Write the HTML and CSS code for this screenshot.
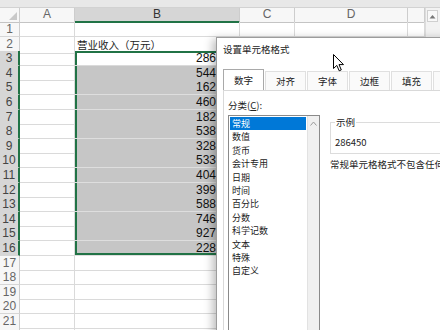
FILE: index.html
```html
<!DOCTYPE html>
<html lang="zh-CN">
<head>
<meta charset="utf-8">
<title>设置单元格格式</title>
<link rel="stylesheet" href="styles.css">
</head>
<body>
<div class="app">
  <div class="formula"></div>
  <div class="main">
    <div class="sheet">
      <div class="row hdr"><div class="corner"><span class="tri"></span></div><div class="ch">A</div><div class="ch on">B</div><div class="ch">C</div><div class="ch">D</div><div class="ch"></div></div>
      <div class="row"><div class="rh">1</div><div class="c"></div><div class="c"></div><div class="c"></div><div class="c"></div><div class="c"></div></div>
      <div class="row"><div class="rh">2</div><div class="c"></div><div class="c txt">营业收入（万元）</div><div class="c"></div><div class="c"></div><div class="c"></div></div>
      <div class="row sel first"><div class="rh">3</div><div class="c"></div><div class="c b num active">286450</div><div class="c"></div><div class="c"></div><div class="c"></div></div>
      <div class="row sel"><div class="rh">4</div><div class="c"></div><div class="c b num">544320</div><div class="c"></div><div class="c"></div><div class="c"></div></div>
      <div class="row sel"><div class="rh">5</div><div class="c"></div><div class="c b num">162780</div><div class="c"></div><div class="c"></div><div class="c"></div></div>
      <div class="row sel"><div class="rh">6</div><div class="c"></div><div class="c b num">460150</div><div class="c"></div><div class="c"></div><div class="c"></div></div>
      <div class="row sel"><div class="rh">7</div><div class="c"></div><div class="c b num">182930</div><div class="c"></div><div class="c"></div><div class="c"></div></div>
      <div class="row sel"><div class="rh">8</div><div class="c"></div><div class="c b num">538610</div><div class="c"></div><div class="c"></div><div class="c"></div></div>
      <div class="row sel"><div class="rh">9</div><div class="c"></div><div class="c b num">328470</div><div class="c"></div><div class="c"></div><div class="c"></div></div>
      <div class="row sel"><div class="rh">10</div><div class="c"></div><div class="c b num">533290</div><div class="c"></div><div class="c"></div><div class="c"></div></div>
      <div class="row sel"><div class="rh">11</div><div class="c"></div><div class="c b num">404860</div><div class="c"></div><div class="c"></div><div class="c"></div></div>
      <div class="row sel"><div class="rh">12</div><div class="c"></div><div class="c b num">399120</div><div class="c"></div><div class="c"></div><div class="c"></div></div>
      <div class="row sel"><div class="rh">13</div><div class="c"></div><div class="c b num">588740</div><div class="c"></div><div class="c"></div><div class="c"></div></div>
      <div class="row sel"><div class="rh">14</div><div class="c"></div><div class="c b num">746350</div><div class="c"></div><div class="c"></div><div class="c"></div></div>
      <div class="row sel"><div class="rh">15</div><div class="c"></div><div class="c b num">927680</div><div class="c"></div><div class="c"></div><div class="c"></div></div>
      <div class="row sel last"><div class="rh">16</div><div class="c"></div><div class="c b num">228510</div><div class="c"></div><div class="c"></div><div class="c"></div></div>
      <div class="row"><div class="rh">17</div><div class="c"></div><div class="c"></div><div class="c"></div><div class="c"></div><div class="c"></div></div>
      <div class="row"><div class="rh">18</div><div class="c"></div><div class="c"></div><div class="c"></div><div class="c"></div><div class="c"></div></div>
      <div class="row"><div class="rh">19</div><div class="c"></div><div class="c"></div><div class="c"></div><div class="c"></div><div class="c"></div></div>
      <div class="row"><div class="rh">20</div><div class="c"></div><div class="c"></div><div class="c"></div><div class="c"></div><div class="c"></div></div>
      <div class="row"><div class="rh">21</div><div class="c"></div><div class="c"></div><div class="c"></div><div class="c"></div><div class="c"></div></div>
      <div class="row"><div class="rh"></div><div class="c"></div><div class="c"></div><div class="c"></div><div class="c"></div><div class="c"></div></div>
    </div>
    <div class="vscroll"><div class="vbtn"><svg width="7" height="5" viewBox="0 0 7 5"><path d="M0.5 4.5 L3.5 1 L6.5 4.5 Z" fill="#777"/></svg></div></div>
  </div>

  <div class="dialog">
    <div class="title">设置单元格格式</div>
    <div class="tabs">
      <div class="tab on">数字</div>
      <div class="tab">对齐</div>
      <div class="tab">字体</div>
      <div class="tab">边框</div>
      <div class="tab">填充</div>
      <div class="tab"></div>
    </div>
    <div class="panel">
      <div class="label">分类(<u>C</u>):</div>
      <div class="list">
        <div class="items">
          <div class="item on">常规</div>
          <div class="item">数值</div>
          <div class="item">货币</div>
          <div class="item">会计专用</div>
          <div class="item">日期</div>
          <div class="item">时间</div>
          <div class="item">百分比</div>
          <div class="item">分数</div>
          <div class="item">科学记数</div>
          <div class="item">文本</div>
          <div class="item">特殊</div>
          <div class="item">自定义</div>
        </div>
        <div class="lscroll"><svg width="7" height="5" viewBox="0 0 7 5"><path d="M0.5 4.5 L3.5 1 L6.5 4.5" fill="none" stroke="#9a9a9a" stroke-width="1"/></svg></div>
      </div>
      <div class="right">
        <fieldset class="sample">
          <legend>示例</legend>
          <div class="sval">286450</div>
        </fieldset>
        <div class="desc">常规单元格格式不包含任何特定的数字格式。</div>
      </div>
    </div>
  </div>

  <svg class="cursor" width="12" height="18" viewBox="0 0 12 18"><path d="M0.5 0.5 L0.5 14.5 L3.8 11.4 L6.2 16.8 L8.3 15.9 L6 10.6 L10.5 10.6 Z" fill="#fff" stroke="#000" stroke-width="1" stroke-linejoin="round"/></svg>
</div>
</body>
</html>
```

FILE: styles.css
```css
* { box-sizing: border-box; }
html, body { margin: 0; padding: 0; }
body {
  width: 440px;
  height: 330px;
  overflow: hidden;
  background: #fff;
  font-family: "Liberation Sans", Arial, sans-serif;
}
.app {
  position: relative;
  width: 440px;
  height: 330px;
  overflow: hidden;
}
.formula {
  height: 8px;
  background: #e8e8e8;
  border-bottom: 1px solid #d2d2d2;
}
.main { display: flex; }
.sheet { width: 425px; }
.row {
  display: grid;
  grid-template-columns: 20px 55px 165px 55px 113px 17px;
  height: 14.6px;
}
.row.hdr { height: 14px; }
.c {
  border-right: 1px solid #dadada;
  border-bottom: 1px solid #dadada;
  font-size: 12px;
  line-height: 14px;
  color: #111;
  white-space: nowrap;
  overflow: hidden;
}
.rh, .ch, .corner {
  background: #f7f7f7;
  border-right: 1px solid #cdcdcd;
  border-bottom: 1px solid #d6d6d6;
  color: #666;
  font-size: 12px;
  line-height: 14px;
  text-align: center;
}
.ch { border-bottom-color: #c4c4c4; line-height: 13px; }
.ch.on {
  background: #d6d6d6;
  color: #333;
  border-bottom: 2px solid #217346;
}
.corner {
  position: relative;
  border-bottom-color: #c4c4c4;
}
.tri {
  position: absolute;
  right: 2px;
  bottom: 2px;
  width: 0;
  height: 0;
  border-left: 8px solid transparent;
  border-bottom: 8px solid #c9c9c9;
}
.txt {
  font-family: "Noto Sans CJK SC", sans-serif;
  font-size: 10.5px;
  line-height: 16px;
  padding-left: 2px;
  color: #222;
  overflow: visible;
}
.num {
  text-align: right;
  padding-right: 3px;
}
.sel .rh {
  background: #d6d6d6;
  color: #444;
  border-right: 2px solid #217346;
}
.sel .b {
  background: #c6c6c6;
  border-bottom-color: #dedede;
  box-shadow: inset 2px 0 #217346;
}
.sel .b.active { background: #fff; border-bottom-color: #dadada; }
.first .b { box-shadow: inset 2px 0 #217346, inset 0 2px #217346; }
.last .b { box-shadow: inset 2px 0 #217346, inset 0 -2px #217346; }

.vscroll {
  width: 15px;
  height: 330px;
  background: #f2f2f2;
  border-left: 1px solid #dcdcdc;
  padding: 2px 2px 0 1px;
}
.vbtn {
  height: 12px;
  border: 1px solid #cfcfcf;
  background: #f8f8f8;
  display: flex;
  align-items: center;
  justify-content: center;
}

.dialog {
  position: absolute;
  left: 216px;
  top: 37px;
  width: 260px;
  height: 320px;
  background: #fff;
  border: 1px solid #9c9c9c;
  box-shadow: -3px 2px 9px rgba(0, 0, 0, 0.28);
  font-family: "Noto Sans CJK SC", sans-serif;
  font-size: 9.5px;
  color: #222;
}
.title {
  height: 22px;
  padding: 4px 6px 0;
  line-height: 14px;
}
.tabs {
  display: flex;
  align-items: flex-end;
  gap: 1px;
  margin: 9px 0 0 6px;
  height: 21px;
}
.tab {
  width: 41px;
  height: 19px;
  line-height: 18px;
  text-align: center;
  border: 1px solid #e0e0e0;
  border-bottom: none;
  background: #fafafa;
}
.tab.on {
  height: 21px;
  line-height: 20px;
  background: #fff;
  border-color: #a9a9a9;
}
.panel {
  margin-left: 6px;
  height: 240px;
  border-left: 1px solid #d9d9d9;
  border-top: 1px solid #d9d9d9;
  padding: 7px 0 0 4px;
  display: grid;
  grid-template-columns: 92px 1fr;
  grid-template-rows: 14px 1fr;
  column-gap: 10px;
  row-gap: 3px;
}
.label {
  grid-column: 1 / span 2;
  line-height: 14px;
}
.list {
  display: flex;
  border: 1px solid #8a8a8a;
  height: 230px;
}
.items {
  flex: 1;
  padding: 1px;
}
.item {
  height: 13.4px;
  line-height: 13.4px;
  font-size: 9px;
  padding-left: 2px;
  white-space: nowrap;
}
.item.on {
  background: #0078d7;
  color: #fff;
}
.lscroll {
  width: 12px;
  background: #f0f0f0;
  border-left: 1px solid #e2e2e2;
  display: flex;
  justify-content: center;
  padding-top: 5px;
}
.right {
  display: flex;
  flex-direction: column;
  white-space: nowrap;
}
.sample {
  margin: 0;
  padding: 0 4px 4px;
  border: 1px solid #dcdcdc;
  min-width: 0;
}
.sample legend {
  padding: 0 1px;
  line-height: 14px;
}
.sval {
  padding-top: 6px;
  line-height: 14px;
}
.desc {
  margin-top: 3px;
  line-height: 14px;
}
.cursor {
  position: absolute;
  left: 333px;
  top: 54px;
}
```
